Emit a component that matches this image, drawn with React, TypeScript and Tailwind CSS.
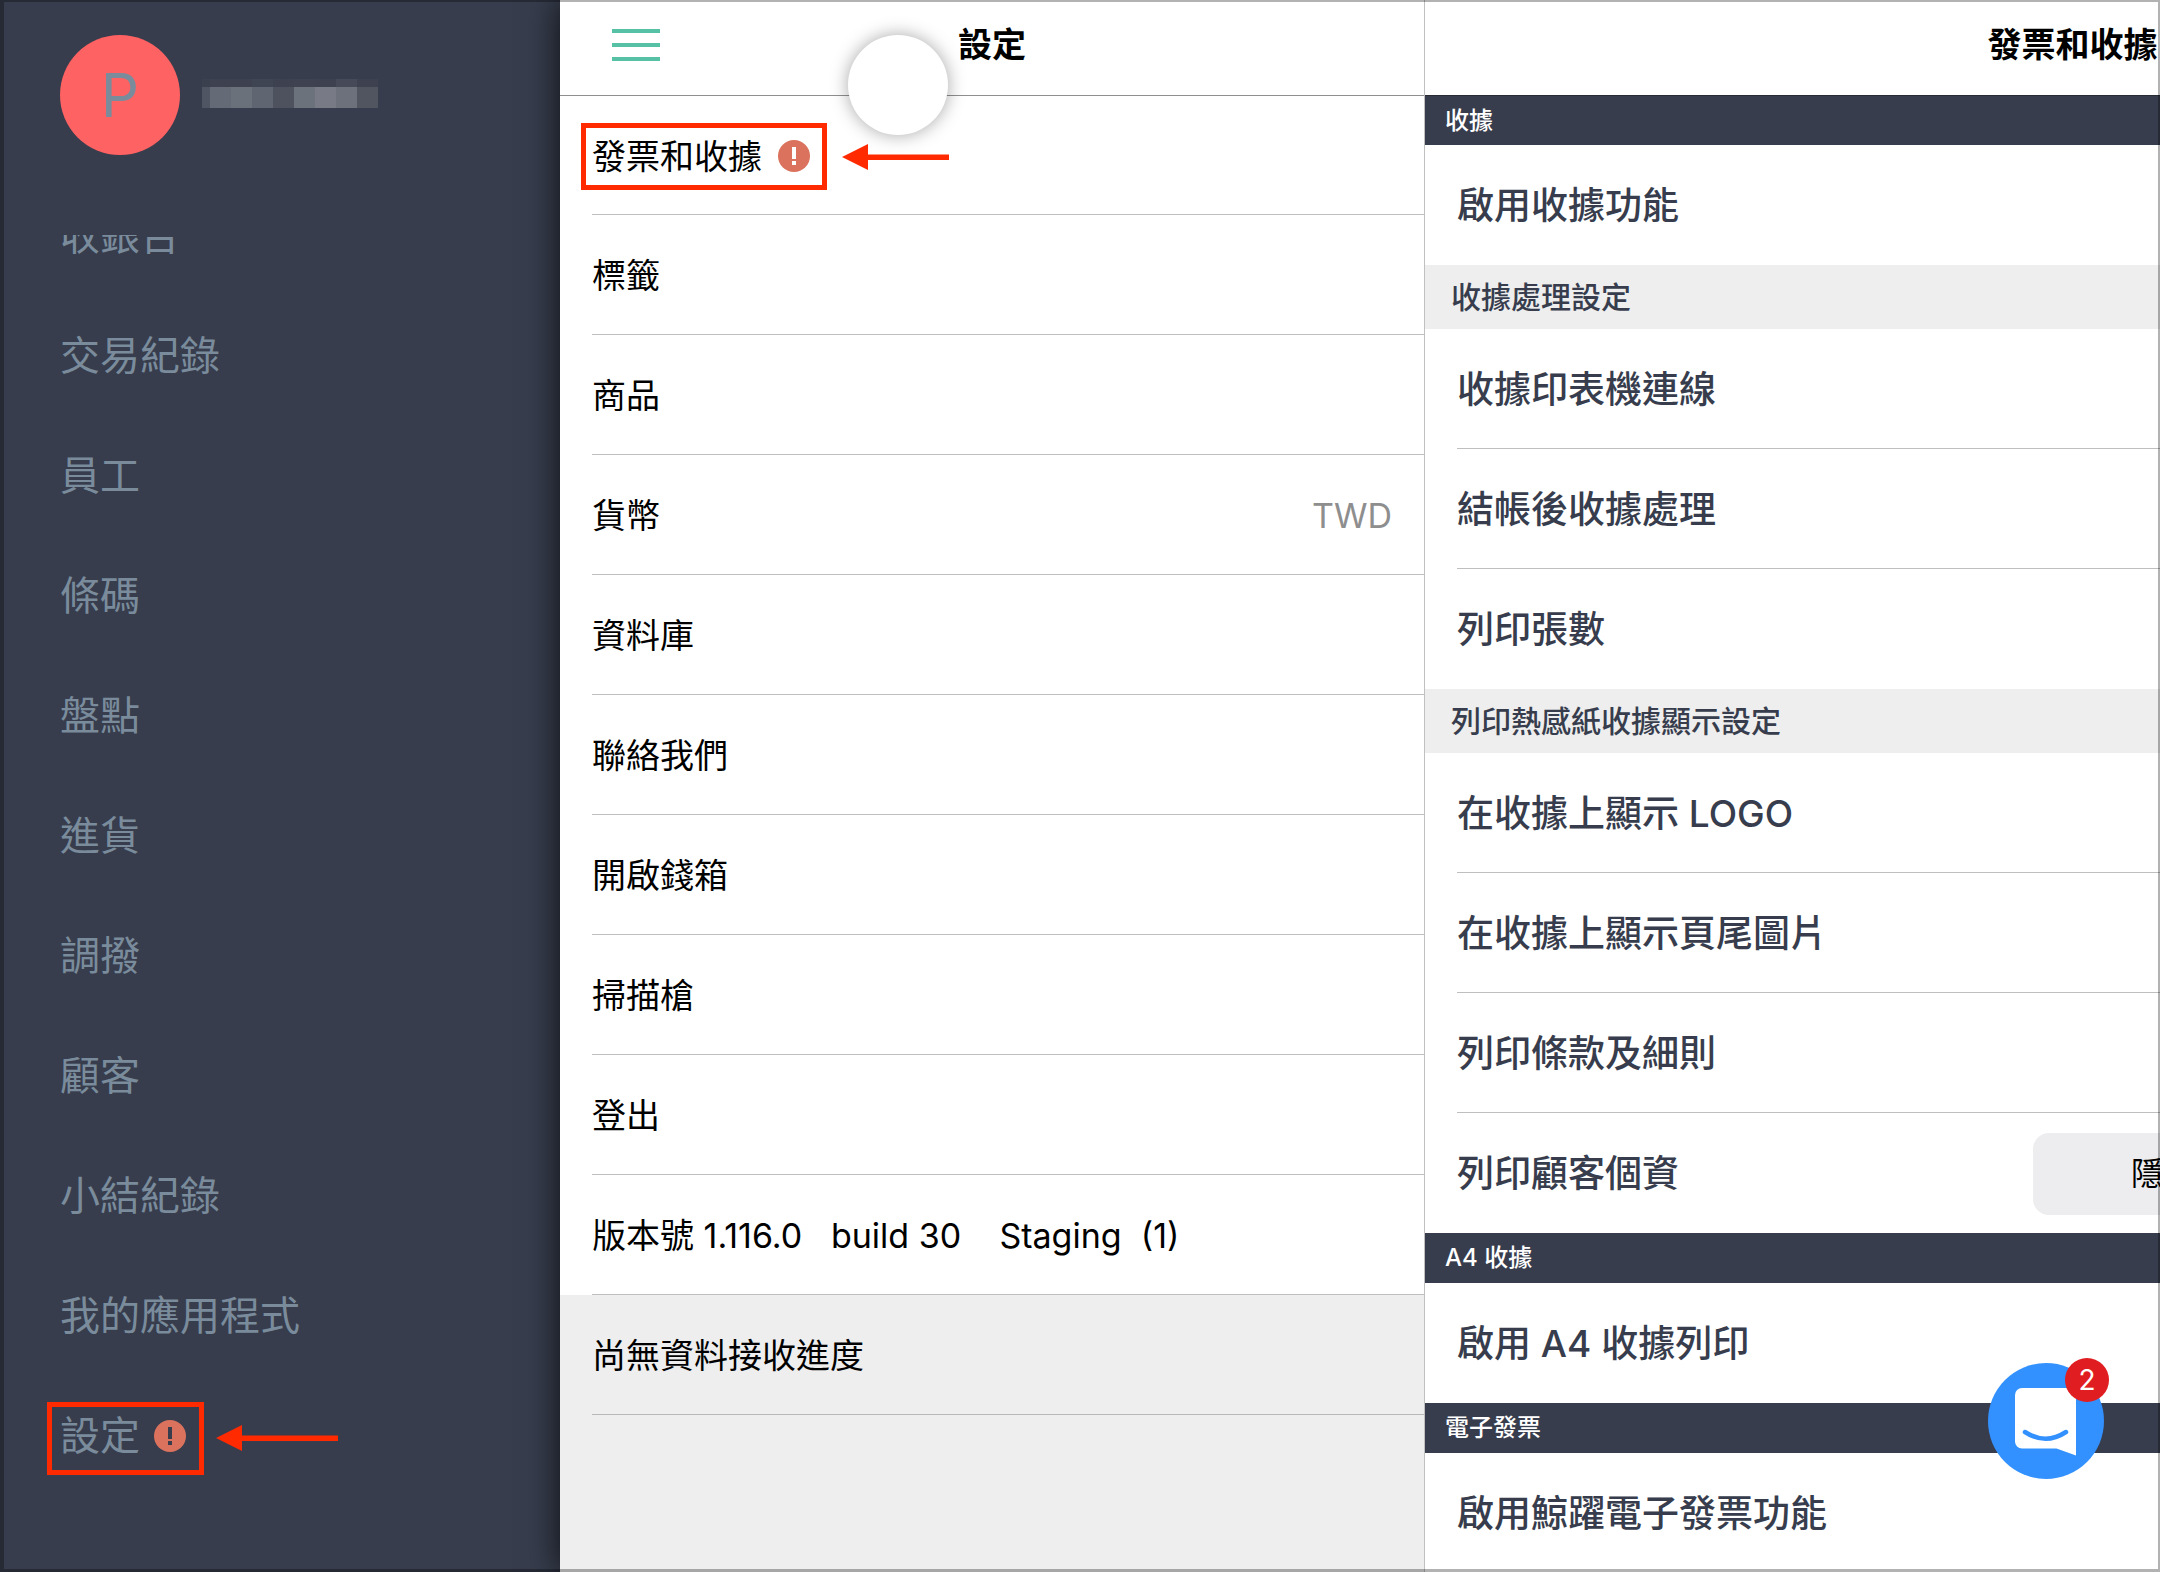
import clsx from 'clsx';

const menuItems = ['收銀台', '交易紀錄', '員工', '條碼', '盤點', '進貨', '調撥', '顧客', '小結紀錄', '我的應用程式', '設定'];

const settings = [
    { label: '發票和收據', alert: true },
    { label: '標籤' },
    { label: '商品' },
    { label: '貨幣', value: 'TWD' },
    { label: '資料庫' },
    { label: '聯絡我們' },
    { label: '開啟錢箱' },
    { label: '掃描槍' },
    { label: '登出' },
    { label: '版本號 1.116.0   build 30    Staging  (1)' },
];

const sections = [
    {
        title: '收據',
        groups: [
            { rows: ['啟用收據功能'] },
            { title: '收據處理設定', rows: ['收據印表機連線', '結帳後收據處理', '列印張數'] },
            {
                title: '列印熱感紙收據顯示設定',
                rows: ['在收據上顯示 LOGO', '在收據上顯示頁尾圖片', '列印條款及細則', '列印顧客個資'],
            },
        ],
    },
    { title: 'A4 收據', groups: [{ rows: ['啟用 A4 收據列印'] }] },
    { title: '電子發票', groups: [{ rows: ['啟用鯨躍電子發票功能'] }] },
];

// pixelated account name
const mosaic = [
    { width: 'w-2', top: 'bg-[#3b404f]', bottom: 'bg-[#4f5563]' },
    { width: 'w-[21px]', top: 'bg-[#3d4150]', bottom: 'bg-[#646a76]' },
    { width: 'w-[21px]', top: 'bg-[#3d4150]', bottom: 'bg-[#6b717b]' },
    { width: 'w-[21px]', top: 'bg-[#404553]', bottom: 'bg-[#5f6571]' },
    { width: 'w-[21px]', top: 'bg-[#3d4150]', bottom: 'bg-[#4d525e]' },
    { width: 'w-[21px]', top: 'bg-[#3e4251]', bottom: 'bg-[#6c727c]' },
    { width: 'w-[21px]', top: 'bg-[#3d4150]', bottom: 'bg-[#787b86]' },
    { width: 'w-[21px]', top: 'bg-[#454958]', bottom: 'bg-[#6d717c]' },
    { width: 'w-[21px]', top: 'bg-[#3d4150]', bottom: 'bg-[#50555f]' },
];

function AlertBadge({ markClass }: { markClass: string }) {
    return (
        <svg viewBox="0 0 32 32" className="size-8 shrink-0" aria-hidden="true">
            <circle cx="16" cy="16" r="16" fill="#db725d" />
            <path d="M14 7h4v12h-4zM14 21h4v4h-4z" className={markClass} />
        </svg>
    );
}

function Arrow({ className }: { className: string }) {
    return (
        <svg viewBox="0 0 122 26" preserveAspectRatio="xMinYMid slice" className={clsx('absolute h-[26px]', className)} aria-hidden="true">
            <path d="M0 13 26 0v10.500h96v5.500H26v10z" fill="#ff2a00" />
        </svg>
    );
}

function Sidebar() {
    return (
        <aside className="w-[560px] shrink-0 flex flex-col text-[#7a8c9c]">
            <div className="h-[235px] shrink-0 pt-[35px] pl-[60px]">
                <div className="flex items-center gap-[22px]">
                    <div className="size-[120px] rounded-full bg-[#ff6262] flex items-center justify-center text-[60px]">
                        P
                    </div>
                    <div className="flex pb-1">
                        {mosaic.map((block, index) => (
                            <div key={index} className={block.width}>
                                <div className={clsx('h-2', block.top)} />
                                <div className={clsx('h-[21px]', block.bottom)} />
                            </div>
                        ))}
                    </div>
                </div>
            </div>
            <nav className="flex-1 min-h-0 overflow-hidden">
                <ul className="-mt-[60px]">
                    {menuItems.map((item) => (
                        <li key={item} className="relative">
                            <button className="h-[120px] w-full pt-0.5 pl-[60px] flex items-center gap-3.5 text-[40px]">
                                {item}
                                {item === '設定' && <AlertBadge markClass="fill-[#373d4d]" />}
                            </button>
                            {item === '設定' && (
                                <>
                                    <div className="absolute left-[47px] top-[27px] w-[157px] h-[73px] border-[5px] border-[#ff2a00]" />
                                    <Arrow className="left-[216px] top-[50px] w-[122px]" />
                                </>
                            )}
                        </li>
                    ))}
                </ul>
            </nav>
        </aside>
    );
}

function SettingsList() {
    return (
        <section className="relative w-2/5 shrink-0 flex flex-col bg-[#eeeeee] text-black">
            <header className="relative h-[95px] shrink-0 bg-white flex items-center justify-center pb-1.5">
                <button aria-label="選單" className="absolute left-[52px] top-[29px] w-12 flex flex-col gap-[10px]">
                    <span className="h-1 bg-[#56c1a5]" />
                    <span className="h-1 bg-[#56c1a5]" />
                    <span className="h-1 bg-[#56c1a5]" />
                </button>
                <h1 className="text-[34px] font-semibold">設定</h1>
            </header>
            <ul className="text-[34px]">
                {settings.map((item, index) => (
                    <li key={item.label} className={clsx('relative bg-white pl-8', index === 0 && 'border-t border-[#8f8f8f]')}>
                        <button
                            className={clsx(
                                'w-full flex items-center gap-4 pt-0.5 pr-8 border-b border-[#bfbfbf] whitespace-pre',
                                index === 0 ? 'h-[119px]' : 'h-[120px]',
                            )}
                        >
                            {item.label}
                            {item.alert && <AlertBadge markClass="fill-white" />}
                            {item.value && <span className="ml-auto text-[#8e8e8e]">{item.value}</span>}
                        </button>
                        {item.alert && (
                            <>
                                <div className="absolute left-[21px] top-[27px] w-[246px] h-[67px] border-[5px] border-[#ff2a00]" />
                                <Arrow className="left-[282px] top-[48px] w-[107px]" />
                            </>
                        )}
                    </li>
                ))}
            </ul>
            <p className="ml-8 h-[120px] pt-0.5 flex items-center border-b border-[#b8b8b8] text-[34px]">尚無資料接收進度</p>
            <div className="absolute left-[288px] top-[35px] size-[100px] rounded-full bg-white shadow-[0_0_18px_rgba(0,0,0,0.35)]" />
        </section>
    );
}

function ReceiptSettings() {
    return (
        <section className="w-3/5 shrink-0 border-l border-[#c0c0c0] bg-white text-[#373d4d]">
            <header className="h-[95px] flex items-center justify-center pb-1.5">
                <h2 className="text-[34px] font-semibold text-black">發票和收據</h2>
            </header>
            {sections.map((section, index) => (
                <div key={section.title}>
                    <h3
                        className={clsx(
                            'h-[50px] pl-5 flex items-center bg-[#373d4d] text-white text-2xl font-medium',
                            index === 0 && 'border-t border-[#262b36]',
                        )}
                    >
                        {section.title}
                    </h3>
                    {section.groups.map((group, groupIndex) => (
                        <div key={groupIndex}>
                            {group.title && (
                                <h4 className="h-16 pl-[26px] flex items-center bg-[#eeeeee] text-[30px] font-medium">{group.title}</h4>
                            )}
                            <ul className="pl-8 divide-y divide-[#bfbfbf]">
                                {group.rows.map((row) => (
                                    <li key={row} className="h-[120px] pt-0.5 flex items-center justify-between text-[37px] font-medium">
                                        {row}
                                        {row === '列印顧客個資' && (
                                            <button className="mr-8 w-[655px] h-[82px] pl-[98px] rounded-2xl bg-[#ededef] text-left text-[32px] font-normal text-black">
                                                隱藏
                                            </button>
                                        )}
                                    </li>
                                ))}
                            </ul>
                        </div>
                    ))}
                </div>
            ))}
        </section>
    );
}

function ChatLauncher() {
    return (
        <button aria-label="2 則訊息" className="absolute right-14 bottom-[93px] size-[116px] rounded-full bg-[#3391ff]">
            <svg viewBox="0 0 116 116" className="size-full" aria-hidden="true">
                <path d="M34 25H81a7 7 0 0 1 7 7V92.500L68.500 85.500H34a7 7 0 0 1-7-7V32a7 7 0 0 1 7-7z" fill="#ffffff" />
                <path d="M37 69Q57.500 82.500 78 69" fill="none" stroke="#3391ff" strokeWidth="4.500" strokeLinecap="round" />
            </svg>
            <span className="absolute -right-[5px] -top-[5px] size-11 rounded-full bg-[#e01e22] text-white text-[28px] leading-[44px]">
                2
            </span>
        </button>
    );
}

export default function App() {
    return (
        <div className="relative h-screen overflow-hidden flex bg-[#373d4d] font-['Inter','Noto_Sans_CJK_TC',sans-serif]">
            <Sidebar />
            <main className="w-full shrink-0 flex shadow-[0_0_32px_rgba(0,0,0,0.8)]">
                <SettingsList />
                <ReceiptSettings />
            </main>
            <ChatLauncher />
            <div className="absolute inset-0 pointer-events-none border-t-2 border-r-2 border-b-[3px] border-l-4 border-black/30" />
        </div>
    );
}
